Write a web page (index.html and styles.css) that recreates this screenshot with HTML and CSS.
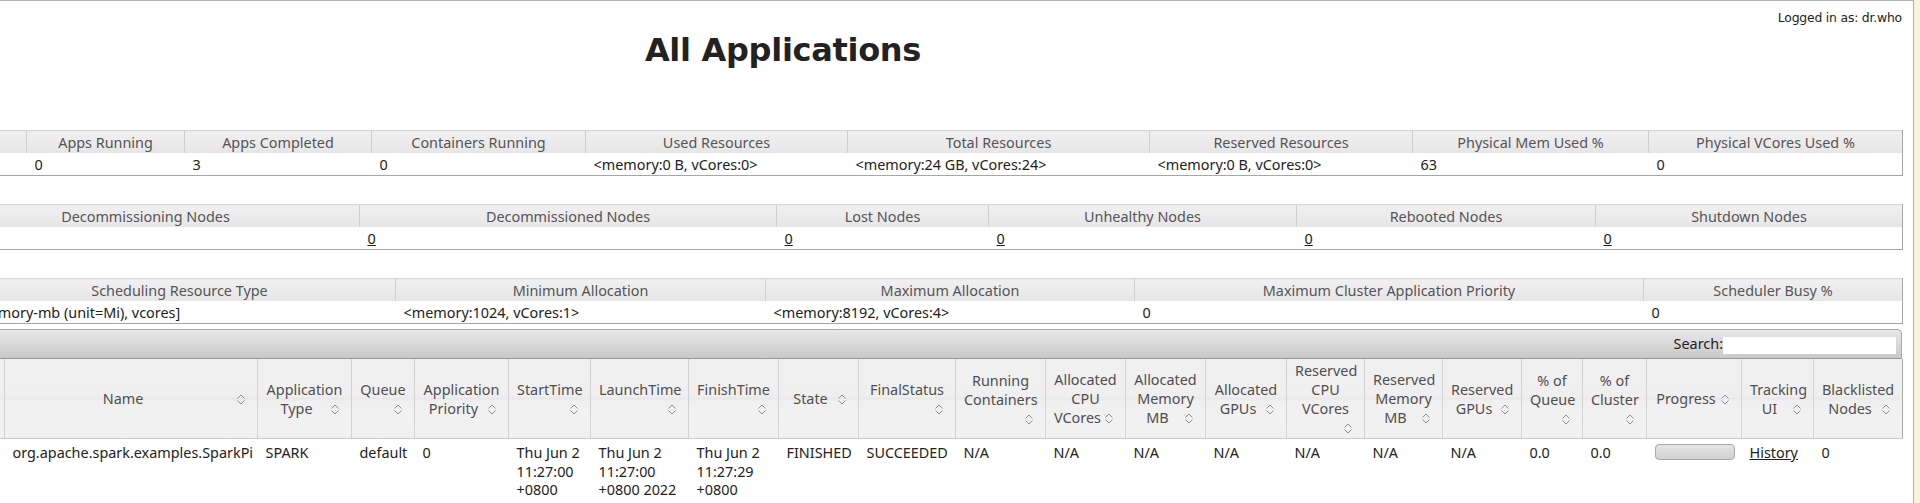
FILE: index.html
```html
<!DOCTYPE html>
<html lang="en">
<head>
    <meta charset="UTF-8">
    <title>All Applications</title>
    <link rel="stylesheet" href="styles.css">
</head>
<body>

<!-- sort arrows used in every column header -->
<svg class="defs" width="0" height="0">
    <symbol id="carat" viewBox="0 0 16 16">
        <path d="M4.5 7.5 8 4 11.5 7.5M4.5 9.5 8 13 11.5 9.5" fill="none" stroke="#8e8e8e" stroke-width="1"/>
    </symbol>
</svg>

<div class="page">
    <div id="header">
        <div class="login">Logged in as: dr.who</div>
        <h1>All Applications</h1>
    </div>

    <div id="content">
        <table class="metrics" id="metricsoverview">
            <colgroup><col><col><col><col><col><col><col><col><col><col></colgroup>
            <thead>
                <tr>
                    <th>Apps Submitted</th>
                    <th>Apps Pending</th>
                    <th>Apps Running</th>
                    <th>Apps Completed</th>
                    <th>Containers Running</th>
                    <th>Used Resources</th>
                    <th>Total Resources</th>
                    <th>Reserved Resources</th>
                    <th>Physical Mem Used %</th>
                    <th>Physical VCores Used %</th>
                </tr>
            </thead>
            <tbody>
                <tr>
                    <td>3</td>
                    <td>0</td>
                    <td>0</td>
                    <td>3</td>
                    <td>0</td>
                    <td>&lt;memory:0 B, vCores:0&gt;</td>
                    <td>&lt;memory:24 GB, vCores:24&gt;</td>
                    <td>&lt;memory:0 B, vCores:0&gt;</td>
                    <td>63</td>
                    <td>0</td>
                </tr>
            </tbody>
        </table>

        <table class="metrics" id="nodemetricsoverview">
            <colgroup><col><col><col><col><col><col><col></colgroup>
            <thead>
                <tr>
                    <th>Active Nodes</th>
                    <th>Decommissioning Nodes</th>
                    <th>Decommissioned Nodes</th>
                    <th>Lost Nodes</th>
                    <th>Unhealthy Nodes</th>
                    <th>Rebooted Nodes</th>
                    <th>Shutdown Nodes</th>
                </tr>
            </thead>
            <tbody>
                <tr>
                    <td><a href="#">3</a></td>
                    <td><a href="#">0</a></td>
                    <td><a href="#">0</a></td>
                    <td><a href="#">0</a></td>
                    <td><a href="#">0</a></td>
                    <td><a href="#">0</a></td>
                    <td><a href="#">0</a></td>
                </tr>
            </tbody>
        </table>

        <table class="metrics" id="schedulermetricsoverview">
            <colgroup><col><col><col><col><col><col></colgroup>
            <thead>
                <tr>
                    <th>Scheduler Type</th>
                    <th>Scheduling Resource Type</th>
                    <th>Minimum Allocation</th>
                    <th>Maximum Allocation</th>
                    <th>Maximum Cluster Application Priority</th>
                    <th>Scheduler Busy %</th>
                </tr>
            </thead>
            <tbody>
                <tr>
                    <td>Capacity Scheduler</td>
                    <td>[memory-mb (unit=Mi), vcores]</td>
                    <td>&lt;memory:1024, vCores:1&gt;</td>
                    <td>&lt;memory:8192, vCores:4&gt;</td>
                    <td>0</td>
                    <td>0</td>
                </tr>
            </tbody>
        </table>

        <div class="apps-wrapper">
            <div class="toolbar">
                <label>Search:<input type="text"></label>
            </div>
            <table class="apps" id="apps">
                <colgroup>
                    <col><col><col><col><col><col><col><col><col><col><col><col>
                    <col><col><col><col><col><col><col><col><col><col><col>
                </colgroup>
                <thead>
                    <tr>
                        <th>ID<svg class="sort"><use href="#carat"/></svg></th>
                        <th>User<svg class="sort"><use href="#carat"/></svg></th>
                        <th>Name<svg class="sort"><use href="#carat"/></svg></th>
                        <th>Application Type<svg class="sort"><use href="#carat"/></svg></th>
                        <th>Queue<svg class="sort"><use href="#carat"/></svg></th>
                        <th>Application Priority<svg class="sort"><use href="#carat"/></svg></th>
                        <th>StartTime<svg class="sort"><use href="#carat"/></svg></th>
                        <th>LaunchTime<svg class="sort"><use href="#carat"/></svg></th>
                        <th>FinishTime<svg class="sort"><use href="#carat"/></svg></th>
                        <th>State<svg class="sort"><use href="#carat"/></svg></th>
                        <th>FinalStatus<svg class="sort"><use href="#carat"/></svg></th>
                        <th>Running Containers<svg class="sort"><use href="#carat"/></svg></th>
                        <th>Allocated CPU VCores<svg class="sort"><use href="#carat"/></svg></th>
                        <th>Allocated Memory MB<svg class="sort"><use href="#carat"/></svg></th>
                        <th>Allocated GPUs<svg class="sort"><use href="#carat"/></svg></th>
                        <th>Reserved CPU VCores<svg class="sort"><use href="#carat"/></svg></th>
                        <th>Reserved Memory MB<svg class="sort"><use href="#carat"/></svg></th>
                        <th>Reserved GPUs<svg class="sort"><use href="#carat"/></svg></th>
                        <th>% of Queue<svg class="sort"><use href="#carat"/></svg></th>
                        <th>% of Cluster<svg class="sort"><use href="#carat"/></svg></th>
                        <th>Progress<svg class="sort"><use href="#carat"/></svg></th>
                        <th>Tracking UI<svg class="sort"><use href="#carat"/></svg></th>
                        <th>Blacklisted Nodes<svg class="sort"><use href="#carat"/></svg></th>
                    </tr>
                </thead>
                <tbody>
                    <tr>
                        <td><a href="#">application_1654139186453_0003</a></td>
                        <td>dr.who</td>
                        <td>org.apache.spark.examples.SparkPi</td>
                        <td>SPARK</td>
                        <td>default</td>
                        <td>0</td>
                        <td>Thu Jun 2 11:27:00 +0800 2022</td>
                        <td>Thu Jun 2 11:27:00 +0800 2022</td>
                        <td>Thu Jun 2 11:27:29 +0800 2022</td>
                        <td>FINISHED</td>
                        <td>SUCCEEDED</td>
                        <td>N/A</td>
                        <td>N/A</td>
                        <td>N/A</td>
                        <td>N/A</td>
                        <td>N/A</td>
                        <td>N/A</td>
                        <td>N/A</td>
                        <td>0.0</td>
                        <td>0.0</td>
                        <td><div class="progress"></div></td>
                        <td><a href="#">History</a></td>
                        <td>0</td>
                    </tr>
                </tbody>
            </table>
        </div>
    </div>
</div>

</body>
</html>
```

FILE: styles.css
```css
html, body {
    margin: 0;
    overflow: hidden;
}

body {
    background: #fbf3dc;
    font-family: "Noto Sans", sans-serif;
    font-size: 14.4px;
    color: #222;
}

.defs {
    position: absolute;
}

/* page is scrolled sideways, left part of the layout is out of view */
.page {
    margin-left: -347px;
    width: 2260px;
    min-height: 540px;
    background: #fff;
    border-top: 1px solid #b0b0b0;
    border-right: 1px solid #b0b0b0;
}

#header {
    padding: 10px 11px 0;
}

.login {
    text-align: right;
    font: 12.4px/14px "DejaVu Sans", sans-serif;
    letter-spacing: -0.2px;
    color: #222;
}

h1 {
    margin: 6px 0 0;
    text-align: center;
    font: bold 32px/38px "DejaVu Sans", sans-serif;
    letter-spacing: -0.3px;
    color: #222;
}

#content {
    padding: 61px 11px 0 47px;
}

table {
    border-collapse: collapse;
    table-layout: fixed;
    width: 2202px;
}

a {
    color: #222;
}

/* small overview tables */
.metrics {
    margin-bottom: 28px;
}

.metrics th {
    height: 22px;
    padding: 0 8px;
    font-weight: normal;
    color: #555;
    text-align: center;
    white-space: nowrap;
    background: linear-gradient(#f0f0f0, #e6e6e6);
    border-top: 1px solid #d6d6d6;
    border-left: 1px solid #d0d0d0;
}

.metrics td {
    height: 22px;
    padding: 0 8px;
    white-space: nowrap;
    border-bottom: 1px solid #a6a6a6;
}

.metrics th:last-child,
.metrics td:last-child {
    border-right: 1px solid #a6a6a6;
}

#metricsoverview col:nth-child(1) { width: 160px; }
#metricsoverview col:nth-child(2) { width: 166px; }
#metricsoverview col:nth-child(3) { width: 158px; }
#metricsoverview col:nth-child(4) { width: 187px; }
#metricsoverview col:nth-child(5) { width: 214px; }
#metricsoverview col:nth-child(6) { width: 262px; }
#metricsoverview col:nth-child(7) { width: 302px; }
#metricsoverview col:nth-child(8) { width: 263px; }
#metricsoverview col:nth-child(9) { width: 236px; }
#metricsoverview col:nth-child(10) { width: 254px; }

#nodemetricsoverview col:nth-child(1) { width: 231px; }
#nodemetricsoverview col:nth-child(2) { width: 428px; }
#nodemetricsoverview col:nth-child(3) { width: 417px; }
#nodemetricsoverview col:nth-child(4) { width: 212px; }
#nodemetricsoverview col:nth-child(5) { width: 308px; }
#nodemetricsoverview col:nth-child(6) { width: 299px; }
#nodemetricsoverview col:nth-child(7) { width: 307px; }

#schedulermetricsoverview col:nth-child(1) { width: 263px; }
#schedulermetricsoverview col:nth-child(2) { width: 432px; }
#schedulermetricsoverview col:nth-child(3) { width: 370px; }
#schedulermetricsoverview col:nth-child(4) { width: 369px; }
#schedulermetricsoverview col:nth-child(5) { width: 509px; }
#schedulermetricsoverview col:nth-child(6) { width: 259px; }

/* applications table */
.apps-wrapper {
    margin-top: -23px;
    width: 2202px;
}

.toolbar {
    display: flex;
    justify-content: flex-end;
    align-items: center;
    height: 28px;
    padding-right: 5px;
    background: linear-gradient(#e8e8e8, #c9c9c9);
    border: 1px solid #aaa;
    border-bottom-color: #999;
    border-top-right-radius: 5px;
}

.toolbar input {
    width: 173px;
    height: 17px;
    margin: 0;
    padding: 0;
    border: 0;
    background: #fff;
    vertical-align: middle;
}

.apps th {
    padding: 2px 8px;
    line-height: 19px;
    font-weight: normal;
    color: #4f4f4f;
    text-align: center;
    vertical-align: middle;
    background: linear-gradient(#f0f0f0 0%, #efefef 47%, #e9e9e9 50%, #f0f0f0 54%, #f1f1f1 100%);
    border-left: 1px solid #d3d3d3;
    border-bottom: 1px solid #cdcdcd;
}

.apps th:last-child {
    border-right: 1px solid #aaa;
}

.sort {
    float: right;
    width: 16px;
    height: 16px;
    margin-top: 2px;
}

.apps td {
    padding: 5px 6px 5px 8px;
    line-height: 18.5px;
    vertical-align: top;
}

.progress {
    width: 80px;
    height: 16px;
    box-sizing: border-box;
    border: 1px solid #aaa;
    border-radius: 4px;
    background: linear-gradient(#e6e6e6, #d0d0d0);
}

.apps col:nth-child(1) { width: 230px; }
.apps col:nth-child(2) { width: 74px; }
.apps col:nth-child(3) { width: 253px; }
.apps col:nth-child(4) { width: 94px; }
.apps col:nth-child(5) { width: 63px; }
.apps col:nth-child(6) { width: 94px; }
.apps col:nth-child(7) { width: 82px; }
.apps col:nth-child(8) { width: 98px; }
.apps col:nth-child(9) { width: 90px; }
.apps col:nth-child(10) { width: 80px; }
.apps col:nth-child(11) { width: 97px; }
.apps col:nth-child(12) { width: 90px; }
.apps col:nth-child(13) { width: 80px; }
.apps col:nth-child(14) { width: 80px; }
.apps col:nth-child(15) { width: 81px; }
.apps col:nth-child(16) { width: 78px; }
.apps col:nth-child(17) { width: 78px; }
.apps col:nth-child(18) { width: 79px; }
.apps col:nth-child(19) { width: 61px; }
.apps col:nth-child(20) { width: 64px; }
.apps col:nth-child(21) { width: 95px; }
.apps col:nth-child(22) { width: 72px; }
.apps col:nth-child(23) { width: 89px; }
```
